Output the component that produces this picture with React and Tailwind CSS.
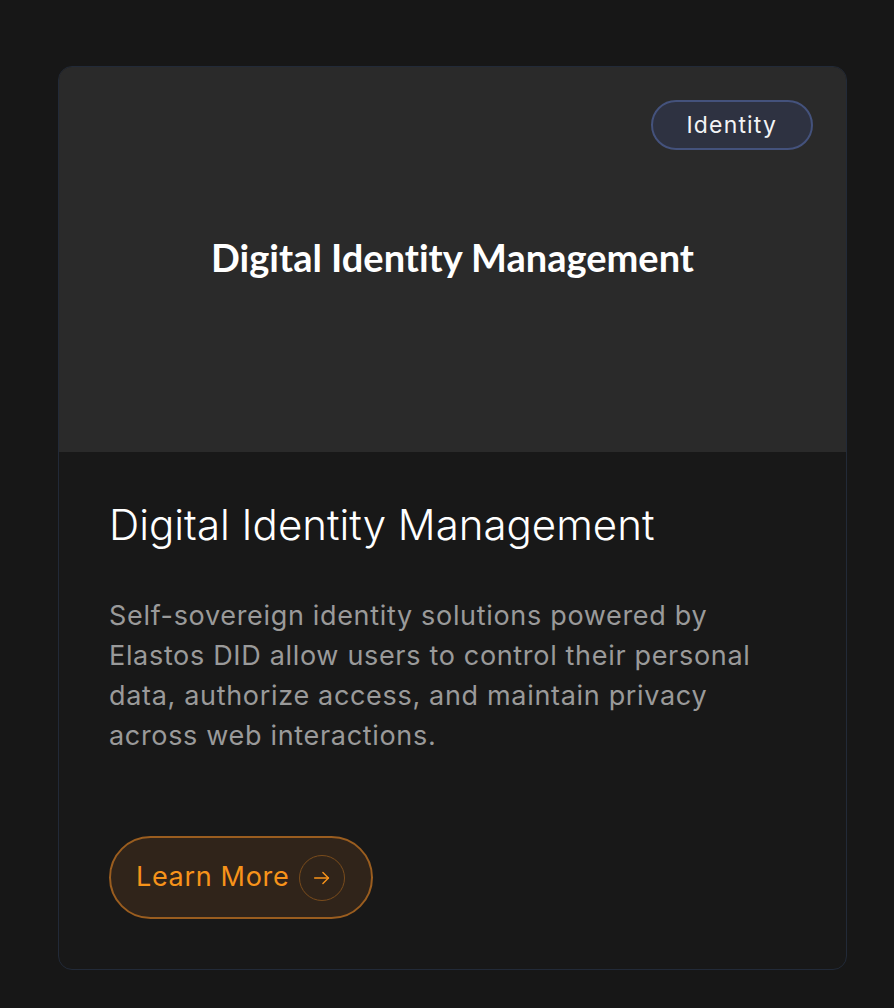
import React from 'react';

export default function App() {
    return (
        <div className="min-h-screen bg-[#171717] px-[58px] pt-[66px]" style={{ fontFamily: 'Inter, "Noto Sans", sans-serif' }}>
            <div className="w-[789px] overflow-hidden rounded-[14px] border border-[#222a38] bg-[#181818]">
                {/* 画像エリア */}
                <div className="relative flex h-[385px] items-center justify-center bg-[#2a2a2a]">
                    <span className="absolute right-[33px] top-[33px] rounded-full border-2 border-[#44527c] bg-[#2e3241] px-[34px] py-[10px] text-[23px] leading-[26px] tracking-wider text-[#f3f4f6]">
                        Identity
                    </span>
                    <h3 className="-mt-[5px] text-[38px] font-bold text-white [font-variant-ligatures:none]" style={{ fontFamily: 'Lato, sans-serif' }}>
                        Digital Identity Management
                    </h3>
                </div>

                {/* 本文 */}
                <div className="px-[50px] pb-[50px] pt-[49px]">
                    <h2 className="text-[42px] font-light leading-[48px] text-white">
                        Digital Identity Management
                    </h2>
                    <p className="mt-[47px] text-[27px] leading-[40px] tracking-wide text-[#9a9a9a]">
                        Self-sovereign identity solutions powered by Elastos DID allow users to control their personal data, authorize access, and maintain privacy across web interactions.
                    </p>
                    <button className="mt-[80px] flex h-[83px] items-center gap-[10px] rounded-full border-2 border-[#9a5d1f] bg-[#30241a] pl-[25px] pr-[26px] text-[27px] tracking-wide text-[#f7931a]">
                        Learn More
                        <span className="flex h-[46px] w-[46px] items-center justify-center rounded-full border border-[#7a4c1c]">
                            <svg width="22" height="22" viewBox="0 0 24 24" fill="none" stroke="currentColor" strokeWidth="1.6" strokeLinecap="round" strokeLinejoin="round">
                                <path d="M4 12h15" />
                                <path d="M13 6l6 6-6 6" />
                            </svg>
                        </span>
                    </button>
                </div>
            </div>
        </div>
    );
}
